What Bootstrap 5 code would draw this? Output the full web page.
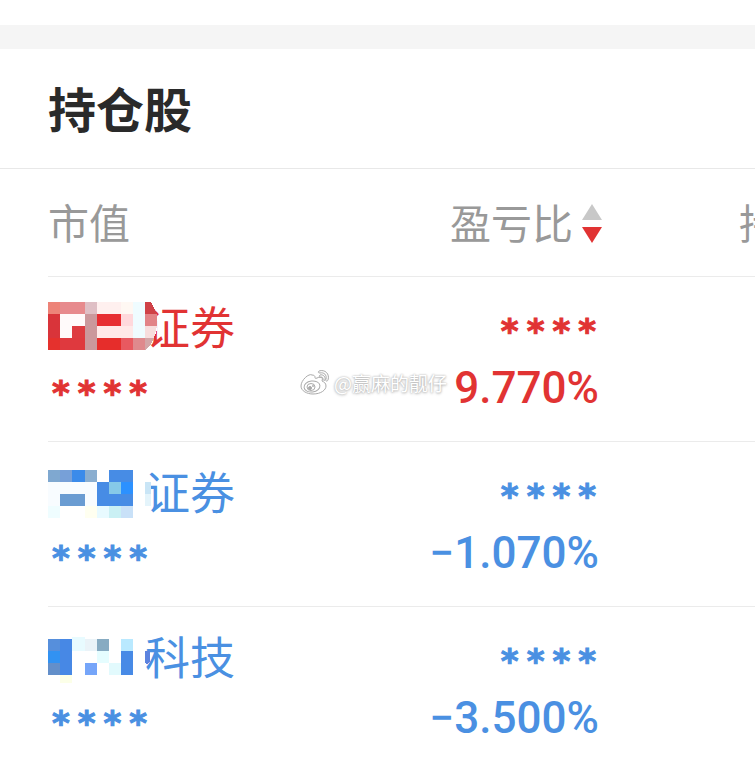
<!DOCTYPE html>
<html lang="zh-CN">
<head>
<meta charset="utf-8">
<meta name="viewport" content="width=device-width, initial-scale=1">
<title>持仓股</title>
<link href="https://cdn.jsdelivr.net/npm/bootstrap@5.3.0/dist/css/bootstrap.min.css" rel="stylesheet">
<style>
body{font-family:"Noto Sans CJK SC",sans-serif;background:#fff;color:#2a2a2a;overflow-x:hidden}
.band{height:24px;margin-top:25px;background:#f5f5f5}
.panel-title{font-size:48px;line-height:72px;font-weight:700;padding:22px 48px 25px;border-bottom:1px solid #e8e8e8}
.holdings{padding-left:48px}
.holdings table{table-layout:fixed;width:100%;margin:0}
.holdings th,.holdings td{padding:0;border-bottom:1px solid #ebebeb;vertical-align:top;white-space:nowrap}
.holdings thead th{font-size:41px;line-height:60px;font-weight:400;color:#999;padding:22px 0 25px}
.holdings tbody tr:last-child>*{border-bottom-color:transparent}
.c-name{width:40%}
.c-ratio{width:38.5%}
.holdings thead .more{padding-left:136px}
.sort-btn{color:inherit;line-height:60px}
.sort-btn svg{margin-top:4px}
.up{color:#e13333}
.down{color:#4a90e2}
.line-a{height:60px;margin-top:19px;font-size:45px;line-height:60px;font-weight:400}
.line-b{height:60px;margin-top:2px;margin-bottom:23px}
.mosaic{margin-right:-12px;position:relative}
.stars{font:700 34px/60px "DejaVu Sans",sans-serif;gap:8px;padding:0 4px;-webkit-text-stroke:1px currentColor}
.stars span{height:60px;padding-top:5px}
td .stars{padding-right:7px}
.pct{font:500 44px/60px Roboto,sans-serif;padding-right:4px}
.watermark{position:absolute;left:300px;top:367px;font-size:19px;line-height:32px;color:#fff;text-shadow:0 0 2px #aaa,0 1px 3px #bbb}
</style>
<script src="https://cdn.jsdelivr.net/npm/bootstrap@5.3.0/dist/js/bootstrap.bundle.min.js"></script>
</head>
<body>
<div class="band"></div>
<main class="position-relative">
<h1 class="panel-title m-0">持仓股</h1>
<div class="holdings overflow-hidden">
<table>
<thead>
<tr>
<th scope="col" class="c-name">市值</th>
<th scope="col" class="c-ratio text-end"><button type="button" class="sort-btn border-0 bg-transparent p-0 d-inline-flex align-items-center gap-2">盈亏比<svg width="22" height="40" viewBox="0 0 22 40" aria-hidden="true"><path d="M11 1 21 17H1Z" fill="#c8c8c8"/><path d="M1 24H21L11 40Z" fill="#e13333"/></svg></button></th>
<th scope="col" class="more">持仓</th>
</tr>
</thead>
<tbody>
<tr class="up">
<th scope="row">
<div class="line-a d-flex align-items-center">
<svg class="mosaic" width="109" height="48" viewBox="0 0 109 48" shape-rendering="crispEdges" aria-hidden="true">
<path fill="#fff" d="M0 0H103L109 12V28L104 41 96 48H0Z"/>
<path fill="#ed8378" d="M0 0H12V12H0Z"/><path fill="#e78a8d" d="M12 0H37V12H12Z"/><path fill="#dfbfc5" d="M37 0H49V12H37Z"/><path fill="#fff0ef" d="M49 0H73V12H49Z"/><path fill="#fff8f3" d="M73 0H85V12H73Z"/><path fill="#effcff" d="M85 0H97V36H85Z"/><path fill="#cf4147" d="M97 0H103L109 12H97Z"/>
<path fill="#d9343a" d="M0 12H12V36H0Z"/><path fill="#fffafa" d="M12 12H37V24H24V36H12Z"/><path fill="#de3b40" d="M24 24H37V36H24Z"/><path fill="#cb989c" d="M37 12H49V48H37Z"/><path fill="#e72e32" d="M49 12H73V24H49Z"/><path fill="#ffd9dc" d="M73 12H85V24H73Z"/><path fill="#e28387" d="M97 12H109V24H97Z"/>
<path fill="#ffe9e8" d="M49 24H85V36H49Z"/><path fill="#f7dddd" d="M97 24H109L106 36H97Z"/>
<path fill="#e5312d" d="M0 36H12V48H0Z"/><path fill="#df393e" d="M12 36H37V48H12Z"/><path fill="#e62d2b" d="M49 36H73V48H49Z"/><path fill="#e85960" d="M73 36H85V48H73Z"/><path fill="#df898d" d="M85 36H97V48H85Z"/><path fill="#d3a6a8" d="M97 36H106L103 42 97 48Z"/>
</svg><span>证券</span></div>
<div class="line-b"><div class="stars d-flex"><span>*</span><span>*</span><span>*</span><span>*</span></div></div>
</th>
<td>
<div class="line-a"><div class="stars d-flex justify-content-end"><span>*</span><span>*</span><span>*</span><span>*</span></div></div>
<div class="line-b pct text-end">9.770%</div>
</td><td></td>
</tr>
<tr class="down">
<th scope="row">
<div class="line-a d-flex align-items-center">
<svg class="mosaic" width="109" height="54" viewBox="0 -6 109 54" shape-rendering="crispEdges" aria-hidden="true">
<path fill="#7fa8d0" d="M0 0H12V12H0Z"/><path fill="#77a0d8" d="M12 0H24V12H12Z"/><path fill="#3b8bea" d="M24 0H37V12H24Z"/><path fill="#8aaed0" d="M37 0H49V12H37Z"/><path fill="#478ce5" d="M61 0H85V36H49V12H61Z"/><path fill="#f8fcff" d="M0 12H49V36H0Z"/><path fill="#86c9e8" d="M61 12H73V24H61Z"/><path fill="#2c91ff" d="M73 12H85V24H73Z"/><path fill="#6a9cd2" d="M12 24H37V36H12Z"/><path fill="#effdff" d="M0 36H12V48H0Z"/><path fill="#fffff0" d="M37 36H49V48H37Z"/><path fill="#e8faff" d="M49 36H61V48H49Z"/><path fill="#caf0f4" d="M61 36H73V48H61Z"/><path fill="#c9e1f8" d="M73 36H85V48H73Z"/><path fill="#c9e5f6" d="M97 12H103V24H97Z"/><path fill="#e4f4fb" d="M97 24H103V36H97Z"/>
</svg><span>证券</span></div>
<div class="line-b"><div class="stars d-flex"><span>*</span><span>*</span><span>*</span><span>*</span></div></div>
</th>
<td>
<div class="line-a"><div class="stars d-flex justify-content-end"><span>*</span><span>*</span><span>*</span><span>*</span></div></div>
<div class="line-b pct text-end">−1.070%</div>
</td><td></td>
</tr>
<tr class="down">
<th scope="row">
<div class="line-a d-flex align-items-center">
<svg class="mosaic" width="109" height="54" viewBox="0 -6 109 54" shape-rendering="crispEdges" aria-hidden="true">
<path fill="#4788e5" d="M0 4H24V40H0Z"/><path fill="#568fdc" d="M0 4H12V16H0Z"/><path fill="#3292f2" d="M0 16H12V28H0Z"/><path fill="#638fca" d="M0 28H12V40H0Z"/><path fill="#e8fbff" d="M24 2H37V16H24Z"/><path fill="#eaf3f8" d="M37 4H49V16H37Z"/><path fill="#87abc2" d="M49 4H61V16H49Z"/><path fill="#b9e9ff" d="M73 4H85V16H73Z"/><path fill="#e5fdff" d="M49 16H61V28H49Z"/><path fill="#478ae6" d="M73 16H85V40H73Z"/><path fill="#75a5f9" d="M37 28H49V40H37Z"/><path fill="#e2fafd" d="M61 28H73V40H61Z"/><path fill="#fcffe8" d="M12 40H24V48H12Z"/><path fill="#5c83df" d="M97 16H102V26L99 30 97 28Z"/>
</svg><span>科技</span></div>
<div class="line-b"><div class="stars d-flex"><span>*</span><span>*</span><span>*</span><span>*</span></div></div>
</th>
<td>
<div class="line-a"><div class="stars d-flex justify-content-end"><span>*</span><span>*</span><span>*</span><span>*</span></div></div>
<div class="line-b pct text-end">−3.500%</div>
</td><td></td>
</tr>
</tbody>
</table>
</div>
</main>
<div class="watermark d-flex align-items-center gap-1">
<svg width="30" height="28" viewBox="0 0 30 28" fill="none" stroke="#aaa" stroke-width="1" aria-hidden="true">
<path fill="#fff" d="M12 6C9 4 1 11 1 17c0 5 6 8 12 8 8 0 13-4 13-8 0-3-2-4-4-5 1-3 0-5-5-3-2 1-2 0-2-1 0-1-1-2-3-2Z"/>
<ellipse cx="12" cy="17.500" rx="8" ry="5.500" transform="rotate(-8 12 17.500)"/>
<ellipse cx="11" cy="18" rx="4" ry="3.500"/><circle cx="10" cy="19" r="1.500" fill="#aaa"/><circle cx="13" cy="17" r=".6"/>
<path d="M19 2c6-2 11 3 9 9-1 2-3 1-2-1 1-4-2-7-6-6-2 0-2-1-1-2ZM20 6c3-1 6 2 5 5-1 1-2 0-2-1 0-2-1-2-3-2-1 0-1-1 0-2Z" fill="#fff"/>
</svg><span>@赢麻的靓仔</span></div>
</body>
</html>
